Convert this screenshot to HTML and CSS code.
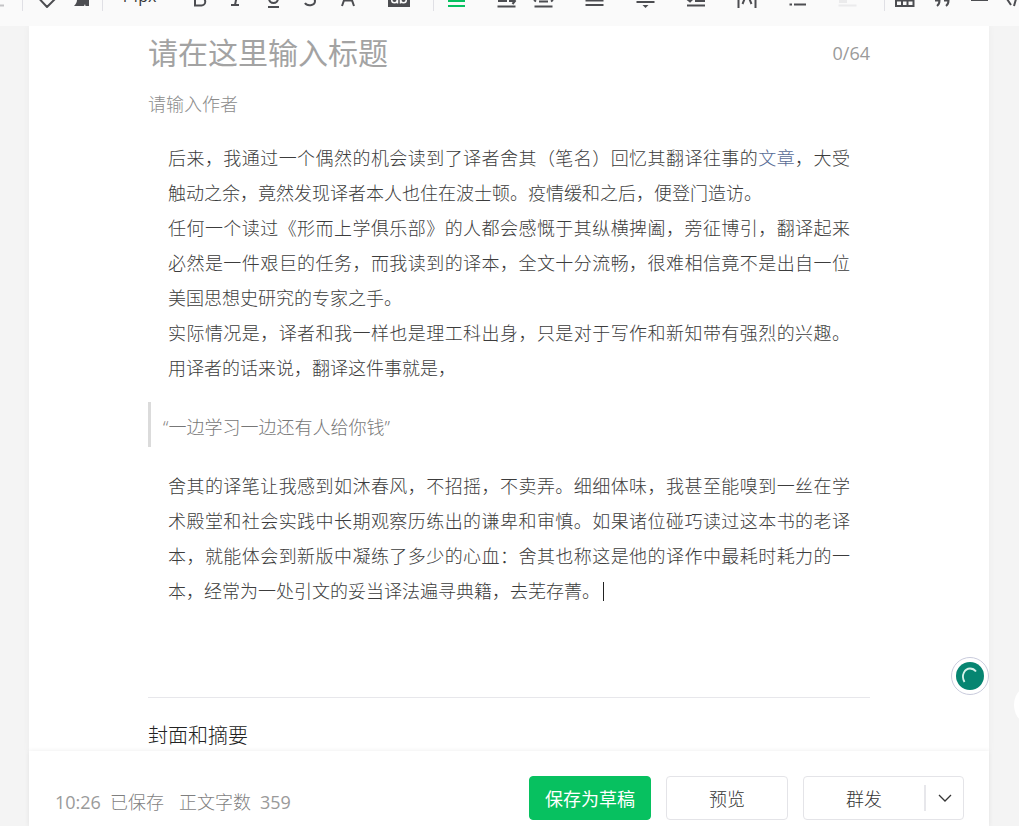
FILE: index.html
```html
<!DOCTYPE html>
<html lang="zh-CN">
<head>
<meta charset="utf-8">
<title>图文编辑</title>
<link rel="stylesheet" href="styles.css">
</head>
<body>
<header class="toolbar">
  <div class="toolbar__row">
    <div class="toolbar__group toolbar__group--first">
      <button class="tool tool--muted" aria-label="重做"><svg viewBox="0 0 24 24"><path d="M3 21.500h12" stroke-width="2"/></svg></button>
    </div>
    <span class="toolbar__sep"></span>
    <div class="toolbar__group">
      <button class="tool" aria-label="清除格式"><svg viewBox="0 0 24 24"><path d="M8 15.500 15 8l7.500 7.500L15 23z" stroke-width="2"/></svg></button>
      <button class="tool" aria-label="格式刷"><svg viewBox="0 0 24 24"><path class="solid" d="M7 8h13v14h-3.500l-.5-2-1 2H5c2-2 3-4 3-6z"/></svg></button>
    </div>
    <span class="toolbar__sep"></span>
    <div class="toolbar__group">
      <select class="tool-size" aria-label="字号"><option>14px</option></select>
      <button class="tool" aria-label="加粗"><svg viewBox="0 0 24 24"><path d="M8 6h6a4 4 0 0 1 0 8H8zM8 14h6.500a3.700 3.700 0 0 1 0 7.500H8z" stroke-width="2"/></svg></button>
      <button class="tool" aria-label="斜体"><svg viewBox="0 0 24 24"><path d="M9 6h8M7 21h8M14 6l-3 15" stroke-width="2"/></svg></button>
      <button class="tool" aria-label="下划线"><svg viewBox="0 0 24 24"><path d="M8 4v10.500a4.500 4.500 0 0 0 9 0V4M7 23h11" stroke-width="2"/></svg></button>
      <button class="tool" aria-label="删除线"><svg viewBox="0 0 24 24"><path d="M17 9c-1-5-9-4-9 0 0 5 9 3 9 8 0 5-8 5.500-10 2" stroke-width="2"/></svg></button>
      <button class="tool tool--menu" aria-label="字体颜色"><svg viewBox="0 0 24 24"><path d="M7 22l6-17 6 17M9 16.500h8" stroke-width="2"/></svg></button>
      <button class="tool tool--menu" aria-label="背景色"><svg viewBox="0 0 24 24"><path class="solid" d="M2 6h22v17H2z"/><g class="knock"><circle cx="8.500" cy="16" r="2.800"/><path d="M11.500 11v8.500M14.500 9v10.500"/><circle cx="17.500" cy="16" r="2.800"/></g></svg></button>
    </div>
    <span class="toolbar__sep"></span>
    <div class="toolbar__group">
      <button class="tool tool--menu tool--active" aria-label="对齐"><svg viewBox="0 0 24 24"><path d="M5 7h17M5 12h17M5 17h17M5 22h17" stroke-width="2"/></svg></button>
      <button class="tool" aria-label="首行缩进"><svg viewBox="0 0 24 24"><path d="M4 17h9M3.500 22.500h18M15 17h6M18.500 14l2.500 3-2.500 3" stroke-width="2"/></svg></button>
      <button class="tool tool--menu" aria-label="两端缩进"><svg viewBox="0 0 24 24"><path d="M8 17.500h9M3.500 22.500h18M3 16l2 1.500M22 16l-2 1.500" stroke-width="2"/></svg></button>
      <button class="tool tool--menu" aria-label="行高"><svg viewBox="0 0 24 24"><path d="M3.500 11.500h18M3.500 16.500h18M3.500 21h18" stroke-width="2"/></svg></button>
      <button class="tool tool--menu" aria-label="段间距"><svg viewBox="0 0 24 24"><path d="M3.500 18h18" stroke-width="2"/><path class="solid" d="M9.500 21h6L12.500 24z"/></svg></button>
      <button class="tool tool--menu" aria-label="清单"><svg viewBox="0 0 24 24"><path d="M3 15l3 2.500L8.500 15M11 17h10M3 21.500h18" stroke-width="2"/></svg></button>
      <button class="tool tool--menu" aria-label="字间距"><svg viewBox="0 0 24 24"><path d="M3.500 10v14M20.500 10v14M7.500 20l4.500-11 4.500 11" stroke-width="2"/></svg></button>
      <button class="tool tool--menu" aria-label="列表"><svg viewBox="0 0 24 24"><path d="M8 20.500h12M3.500 20.500h2.500" stroke-width="2"/></svg></button>
      <button class="tool tool--menu tool--disabled" aria-label="图文浮动"><svg viewBox="0 0 24 24"><path class="solid" d="M2 11h8v8H2z"/><path d="M1.500 21.500h18" stroke-width="2"/></svg></button>
    </div>
    <span class="toolbar__sep"></span>
    <div class="toolbar__group">
      <button class="tool" aria-label="表格"><svg viewBox="0 0 24 24"><path d="M2 7h17.500v15H2zM2 16.500h17.500M8 16v6M13.500 16v6" stroke-width="2"/></svg></button>
      <button class="tool" aria-label="引用"><svg viewBox="0 0 24 24"><path d="M4 16.500h4.500c0 2-.5 4-2.500 5.500M13 16.500h4.500c0 2-.5 4-2.500 5.500" stroke-width="2"/></svg></button>
      <button class="tool" aria-label="分割线"><svg viewBox="0 0 24 24"><path d="M3 16h17" stroke-width="2"/></svg></button>
      <button class="tool" aria-label="代码"><svg viewBox="0 0 24 24"><path d="M6 21l-4-6 4-6M9 22l4-14" stroke-width="2"/></svg></button>
    </div>
  </div>
</header>

<main class="stage">
  <div class="paper">
    <div class="title">
      <input class="title__input" type="text" placeholder="请在这里输入标题" aria-label="标题">
      <span class="title__count">0/64</span>
    </div>
    <input class="author" type="text" placeholder="请输入作者" aria-label="作者">
    <article class="content">
      <p>后来，我通过一个偶然的机会读到了译者舍其（笔名）回忆其翻译往事的<a class="content__link" href="#">文章</a>，大受触动之余，竟然发现译者本人也住在波士顿。疫情缓和之后，便登门造访。</p>
      <p>任何一个读过《形而上学俱乐部》的人都会感慨于其纵横捭阖，旁征博引，翻译起来必然是一件艰巨的任务，而我读到的译本，全文十分流畅，很难相信竟不是出自一位美国思想史研究的专家之手。</p>
      <p>实际情况是，译者和我一样也是理工科出身，只是对于写作和新知带有强烈的兴趣。用译者的话来说，翻译这件事就是，</p>
      <blockquote>“一边学习一边还有人给你钱”</blockquote>
      <p>舍其的译笔让我感到如沐春风，不招摇，不卖弄。细细体味，我甚至能嗅到一丝在学术殿堂和社会实践中长期观察历练出的谦卑和审慎。如果诸位碰巧读过这本书的老译本，就能体会到新版中凝练了多少的心血：舍其也称这是他的译作中最耗时耗力的一本，经常为一处引文的妥当译法遍寻典籍，去芜存菁。<span class="caret"></span></p>
    </article>
    <section class="cover">
      <h2>封面和摘要</h2>
    </section>
  </div>
</main>

<div class="dock">
  <footer class="footer">
    <div class="footer__status"><span class="num">10:26</span><span>已保存</span><span class="footer__words">正文字数</span><span class="num">359</span></div>
    <div class="footer__actions">
      <button class="btn btn--primary">保存为草稿</button>
      <button class="btn">预览</button>
      <div class="split">
        <button class="split__main">群发</button>
        <button class="split__more" aria-label="更多"><svg viewBox="0 0 16 16"><path d="M2 5l6 6 6-6"/></svg></button>
      </div>
    </div>
  </footer>
</div>

<button class="assistant" aria-label="写作助手"><svg viewBox="0 0 28 28"><circle class="assistant__disc" cx="14" cy="14" r="14"/><path d="M8.500 20C4.500 13 9 6.500 14 6.500c2.500 0 4.500 1 6 3"/></svg></button>
<button class="side-handle" aria-label="展开侧栏"></button>
</body>
</html>
```

FILE: styles.css
```css
* {
  box-sizing: border-box;
}

body {
  margin: 0;
  height: 100vh;
  display: flex;
  flex-direction: column;
  overflow: hidden;
  background: #f4f4f4;
  color: #353535;
  font-family: "Open Sans", "Noto Sans CJK SC", sans-serif;
  font-size: 18px;
  font-weight: 300;
}

button,
input,
select {
  font: inherit;
  color: inherit;
  background: none;
  border: 0;
  padding: 0;
  margin: 0;
}

/* Toolbar */
.toolbar {
  position: relative;
  flex: none;
  height: 26px;
  display: flex;
  align-items: flex-end;
  overflow: hidden;
  background: #fafafa;
}

.toolbar__row {
  flex: none;
  height: 60px;
  display: flex;
  align-items: center;
}

.toolbar__group {
  display: flex;
  align-items: center;
  gap: 13px;
}

.toolbar__group--first {
  margin-left: -11px;
}

.toolbar__sep {
  width: 1px;
  height: 30px;
  margin: 0 9px;
  background: #e0e0e5;
}

.tool {
  display: flex;
  color: #4c4d51;
}

.tool--menu {
  padding-right: 14px;
}

.tool--active {
  color: #07c160;
}

.tool--muted {
  color: #c4c4c6;
}

.tool--disabled {
  color: #ebebec;
}

.tool svg {
  width: 24px;
  height: 24px;
  fill: none;
  stroke: currentColor;
}

.tool .solid {
  fill: currentColor;
  stroke: none;
}

.tool .knock {
  stroke: #fafafa;
  stroke-width: 1.5;
}

.tool-size {
  appearance: none;
  width: 62px;
  padding-left: 8px;
  font-size: 16px;
  font-weight: 400;
}

/* Paper */
.stage {
  flex: 1;
  min-height: 0;
  overflow: hidden;
  padding: 0 30px 0 29px;
}

.paper {
  min-height: 100%;
  padding: 0 119px;
  background: #fff;
  box-shadow: 0 0 8px rgba(0, 0, 0, 0.04);
}

.title {
  display: flex;
  align-items: center;
  height: 52px;
}

.title__input {
  flex: 1;
  min-width: 0;
  font-size: 30px;
  font-weight: 400;
  outline: 0;
}

.title__count {
  padding-top: 2px;
  color: #9a9a9a;
  font-weight: 400;
}

.author {
  display: block;
  width: 100%;
  height: 30px;
  margin-top: 11px;
  outline: 0;
}

::placeholder {
  color: #a3a3a3;
  opacity: 1;
}

.author::placeholder {
  color: #8c8c8c;
}

.content {
  min-height: 578px;
  padding-top: 22px;
  color: #3c3c3c;
  line-height: 35px;
  text-align: justify;
}

.content p {
  margin: 0;
  padding: 0 20px;
}

.content__link {
  color: #576b95;
  text-decoration: none;
}

.content blockquote {
  margin: 16px 0 22px;
  padding: 8px 0 2px 12px;
  border-left: 3px solid #dbdbdb;
  color: #777;
}

.caret {
  display: inline-block;
  width: 1px;
  height: 19px;
  margin-left: 3px;
  vertical-align: -3px;
  background: #222;
}

.cover {
  padding-top: 22px;
  border-top: 1px solid #e7e7eb;
}

.cover h2 {
  margin: 0;
  color: #222;
  font-size: 20px;
  font-weight: 300;
  line-height: 32px;
}

/* Footer */
.dock {
  flex: none;
  padding: 0 30px 0 29px;
}

.footer {
  position: relative;
  display: flex;
  align-items: center;
  justify-content: space-between;
  padding: 25px 25px 6px 26px;
  background: #fff;
  box-shadow: 0 0 5px rgba(0, 0, 0, 0.08);
}

.footer__status {
  display: flex;
  align-items: baseline;
  gap: 9px;
  padding-top: 6px;
  color: #7f7f7f;
}

.footer__words {
  margin-left: 6px;
}

.num {
  color: #9a9a9a;
  font-weight: 400;
}

.footer__actions {
  display: flex;
  gap: 15px;
}

.btn {
  width: 122px;
  height: 44px;
  border: 1px solid #e4e4e8;
  border-radius: 4px;
}

.btn--primary {
  border-color: #07c160;
  background: #07c160;
  color: #fff;
  font-weight: 400;
}

.split {
  display: flex;
  align-items: center;
  width: 161px;
  height: 44px;
  border: 1px solid #e4e4e8;
  border-radius: 4px;
}

.split__main {
  flex: 1;
}

.split__more {
  display: flex;
  align-items: center;
  justify-content: center;
  width: 39px;
  height: 26px;
  border-left: 2px solid #e7e7eb;
}

.split__more svg {
  width: 16px;
  height: 16px;
  fill: none;
  stroke: #353535;
  stroke-width: 1.3;
}

/* Floating controls */
.assistant {
  position: fixed;
  right: 30px;
  bottom: 131px;
  display: flex;
  align-items: center;
  justify-content: center;
  width: 38px;
  height: 38px;
  border: 1px solid #c9cbdc;
  border-radius: 50%;
  background: #fff;
}

.assistant svg {
  width: 28px;
  height: 28px;
  fill: none;
  stroke: #d6f2ea;
  stroke-width: 1.8;
}

.assistant .assistant__disc {
  fill: #068571;
  stroke: none;
}

.side-handle {
  position: fixed;
  right: -39px;
  bottom: 99px;
  width: 44px;
  height: 44px;
  border-radius: 50%;
  background: #fff;
}
```
